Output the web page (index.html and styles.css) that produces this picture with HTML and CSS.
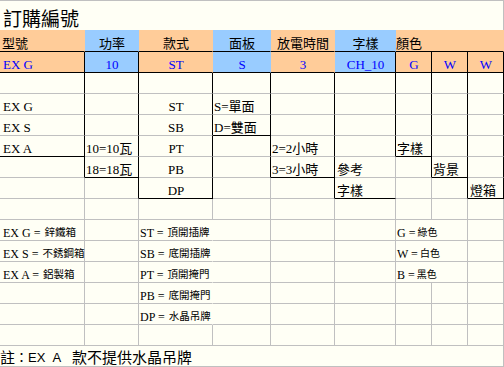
FILE: index.html
```html
<!DOCTYPE html>
<html lang="zh-Hant">
<head>
<meta charset="utf-8">
<title>訂購編號</title>
<link rel="stylesheet" href="styles.css">
</head>
<body>
<div class="sheet">
  <div class="c title">訂購編號</div>

  <div class="c hd or p2">型號</div>
  <div class="c hd bl ctr">功率</div>
  <div class="c hd or ctr">款式</div>
  <div class="c hd bl ctr">面板</div>
  <div class="c hd or ctr">放電時間</div>
  <div class="c hd bl ctr">字樣</div>
  <div class="c hd or span3 p0">顏色</div>

  <div class="c v or kr kb c1">EX G</div>
  <div class="c v bl kr kb ctr">10</div>
  <div class="c v or nr kb ctr">ST</div>
  <div class="c v bl nr kb ctr">S</div>
  <div class="c v or nr kb ctr">3</div>
  <div class="c v bl kr kb ctr">CH_10</div>
  <div class="c v or kr kb ctr">G</div>
  <div class="c v or kr kb ctr">W</div>
  <div class="c v or kr kb ctr">W</div>

  <div class="c kr"></div>
  <div class="c kr"></div>
  <div class="c kr"></div>
  <div class="c kr"></div>
  <div class="c kr"></div>
  <div class="c kr"></div>
  <div class="c kr"></div>
  <div class="c kr"></div>
  <div class="c kr"></div>

  <div class="c kr c1">EX G</div>
  <div class="c kr"></div>
  <div class="c kr ctr">ST</div>
  <div class="c kr">S=單面</div>
  <div class="c kr"></div>
  <div class="c kr"></div>
  <div class="c kr"></div>
  <div class="c kr"></div>
  <div class="c kr"></div>

  <div class="c kr c1">EX S</div>
  <div class="c kr"></div>
  <div class="c kr ctr">SB</div>
  <div class="c kr kb">D=雙面</div>
  <div class="c kr"></div>
  <div class="c kr"></div>
  <div class="c kr"></div>
  <div class="c kr"></div>
  <div class="c kr"></div>

  <div class="c kr kb c1">EX A</div>
  <div class="c kr">10=10瓦</div>
  <div class="c kr ctr">PT</div>
  <div class="c kr"></div>
  <div class="c kr">2=2小時</div>
  <div class="c kr"></div>
  <div class="c kr kb">字樣</div>
  <div class="c kr"></div>
  <div class="c kr"></div>

  <div class="c kr"></div>
  <div class="c kr kb">18=18瓦</div>
  <div class="c kr ctr">PB</div>
  <div class="c kr"></div>
  <div class="c kr kb">3=3小時</div>
  <div class="c p2">參考</div>
  <div class="c kr"></div>
  <div class="c kr kb">背景</div>
  <div class="c kr"></div>

  <div class="c"></div>
  <div class="c kr"></div>
  <div class="c kr kb ctr">DP</div>
  <div class="c"></div>
  <div class="c kr"></div>
  <div class="c kb p2">字樣</div>
  <div class="c"></div>
  <div class="c kr"></div>
  <div class="c kr kb p2">燈箱</div>

  <div class="c"></div>
  <div class="c"></div>
  <div class="c"></div>
  <div class="c"></div>
  <div class="c"></div>
  <div class="c"></div>
  <div class="c"></div>
  <div class="c"></div>
  <div class="c"></div>

  <div class="c lg c1">EX G =<span class="z">鋅鐵箱</span></div>
  <div class="c"></div>
  <div class="c lg nr">ST =<span class="z">頂開插牌</span></div>
  <div class="c"></div>
  <div class="c"></div>
  <div class="c"></div>
  <div class="c lg span2">G =<span class="z zt">綠色</span></div>
  <div class="c"></div>

  <div class="c lg c1">EX S =<span class="z">不銹鋼箱</span></div>
  <div class="c"></div>
  <div class="c lg nr">SB =<span class="z">底開插牌</span></div>
  <div class="c"></div>
  <div class="c"></div>
  <div class="c"></div>
  <div class="c lg span2">W =<span class="z zt">白色</span></div>
  <div class="c"></div>

  <div class="c lg c1">EX A =<span class="z">鋁製箱</span></div>
  <div class="c"></div>
  <div class="c lg nr">PT =<span class="z">頂開掩門</span></div>
  <div class="c"></div>
  <div class="c"></div>
  <div class="c"></div>
  <div class="c lg span2">B =<span class="z zt">黑色</span></div>
  <div class="c"></div>

  <div class="c"></div>
  <div class="c"></div>
  <div class="c lg nr">PB =<span class="z">底開掩門</span></div>
  <div class="c"></div>
  <div class="c"></div>
  <div class="c"></div>
  <div class="c"></div>
  <div class="c"></div>
  <div class="c"></div>

  <div class="c"></div>
  <div class="c"></div>
  <div class="c lg nr">DP =<span class="z">水晶吊牌</span></div>
  <div class="c"></div>
  <div class="c"></div>
  <div class="c"></div>
  <div class="c"></div>
  <div class="c"></div>
  <div class="c"></div>

  <div class="c"></div>
  <div class="c"></div>
  <div class="c"></div>
  <div class="c"></div>
  <div class="c"></div>
  <div class="c"></div>
  <div class="c"></div>
  <div class="c"></div>
  <div class="c"></div>

  <div class="c note">註<span class="lat">：EX&nbsp;&nbsp;A&nbsp;&nbsp;&nbsp;</span>款不提供水晶吊牌</div>
</div>
</body>
</html>
```

FILE: styles.css
```css
* {
  box-sizing: border-box;
}

html,
body {
  margin: 0;
  padding: 0;
  background: #fffff5;
}

body {
  width: 504px;
  height: 367px;
  overflow: hidden;
}

.sheet {
  display: grid;
  grid-template-columns: 85px 54px 74px 58px 64px 61px 36px 36px 36px;
  grid-template-rows: 30px 22px repeat(15, 21px);
  width: 504px;
  font-family: "Liberation Serif", "Noto Sans CJK TC", serif;
  font-size: 13px;
  line-height: 14px;
  color: #000;
}

.c {
  display: flex;
  align-items: flex-end;
  min-width: 0;
  padding-left: 1px;
  border-right: 1px solid #c0c0c0;
  border-bottom: 1px solid #c0c0c0;
  white-space: nowrap;
}

.c1 {
  padding-left: 3px;
}

.p2 {
  padding-left: 2px;
}

.p0 {
  padding-left: 0;
}

.title {
  grid-column: 1 / -1;
  padding-left: 3px;
  border-top: 1px solid #c0c0c0;
  border-bottom: none;
  font-size: 19px;
  line-height: 20px;
}

.hd {
  font-size: 13px;
  border-right-color: transparent;
  border-bottom-color: #000;
}

.or {
  background: #ffcc99;
}

.bl {
  background: #99ccff;
}

.v {
  color: #0000ff;
}

.kr {
  border-right-color: #000;
}

.kb {
  border-bottom-color: #000;
}

.nr {
  border-right-color: transparent;
}

.ctr {
  justify-content: center;
}

.span2 {
  grid-column: span 2;
}

.span3 {
  grid-column: span 3;
}

.lg {
  font-size: 12px;
}

.lg .z {
  margin-left: 4px;
  font-size: 10.5px;
}

.lg .zt {
  margin-left: 2px;
  font-size: 10px;
}

.note {
  grid-column: 1 / -1;
  padding-left: 0;
  font-family: "Liberation Sans", "Noto Sans CJK TC", sans-serif;
  font-size: 15px;
  line-height: 17px;
}

.note .lat {
  font-size: 13px;
}
```
